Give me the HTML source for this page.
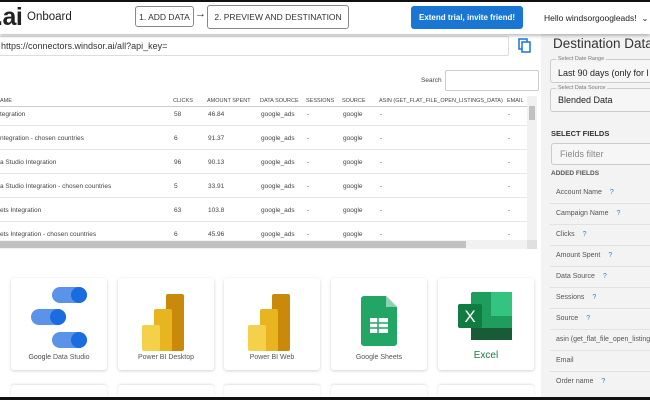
<!DOCTYPE html>
<html style="width:650px;height:400px;overflow:hidden"><head><style>
*{box-sizing:border-box;margin:0;padding:0}
body{width:650px;height:400px;overflow:hidden;background:#fff;font-family:"Liberation Sans",sans-serif;position:relative;color:#333}
.abs{position:absolute}
.hdr{left:0;top:0;width:650px;height:34px;background:#fff;border-top:2px solid #111;box-shadow:0 2px 3px rgba(0,0,0,.25);z-index:5}
.btn{border:1px solid #888;border-radius:3px;font-size:8.5px;color:#333;display:flex;align-items:center;justify-content:center;background:#fff;white-space:nowrap}
.t{font-size:6.5px;color:#444;white-space:nowrap}
.th{font-size:5.5px;color:#444;white-space:nowrap}
.row{left:0;width:527px;height:1px;background:#e6e6e6}
.card{width:96px;height:92px;background:#fff;border-radius:3px;box-shadow:0 1px 3px rgba(0,0,0,.18)}
.card2{width:96px;height:12px;background:#fff;border-radius:3px 3px 0 0;box-shadow:0 -1px 2px rgba(0,0,0,.12)}
.lbl{position:absolute;left:0;right:0;top:76px;text-align:center;font-size:7px;color:#555}
.side{left:541px;top:34px;width:109px;height:363px;background:#f3f3f3}
.fld{left:550px;width:100px;height:21px;border-bottom:1px solid #e2e2e2;font-size:7px;color:#555;padding:6px 0 0 6px;white-space:nowrap;overflow:hidden}
.q{color:#3a7bd5;margin-left:8px}
</style></head><body>
<div class="abs hdr">
  <div class="abs" style="left:-4px;top:1px;font-size:25px;font-weight:bold;color:#222;letter-spacing:-0.5px">.ai</div>
  <div class="abs" style="left:27px;top:9px;font-size:11.5px;color:#222">Onboard</div>
  <div class="abs btn" style="left:135px;top:4px;width:59px;height:21px">1. ADD DATA</div>
  <div class="abs" style="left:195px;top:6px;font-size:11px;color:#222">→</div>
  <div class="abs btn" style="left:207px;top:3px;width:142px;height:24px">2. PREVIEW AND DESTINATION</div>
  <div class="abs" style="left:411px;top:4px;width:112px;height:23px;background:#1976d2;border-radius:3px;color:#fff;font-size:8px;font-weight:bold;display:flex;align-items:center;justify-content:center;white-space:nowrap">Extend trial, invite friend!</div>
  <div class="abs" style="left:544px;top:11px;font-size:8.5px;color:#222;white-space:nowrap">Hello windsorgoogleads! &nbsp;⌄</div>
</div>
<div class="abs" style="left:-2px;top:36px;width:511px;height:20px;border:1px solid #ddd;border-radius:2px;font-size:9px;color:#333;padding:4px 0 0 2px">https://connectors.windsor.ai/all?api_key=</div>
<svg class="abs" style="left:518px;top:38px" width="14" height="15" viewBox="0 0 14 15"><rect x="1" y="1" width="8" height="10" fill="none" stroke="#1976d2" stroke-width="1.5"/><rect x="4" y="4" width="8" height="10" fill="#fff" stroke="#1976d2" stroke-width="1.5"/></svg>
<div class="abs t" style="left:421px;top:77px">Search</div>
<div class="abs" style="left:445px;top:70px;width:94px;height:21px;border:1px solid #ccc;border-radius:2px"></div>
<div class="abs th" style="left:0;top:98px">AME</div>
<div class="abs th" style="left:173px;top:98px">CLICKS</div>
<div class="abs th" style="left:207px;top:98px">AMOUNT SPENT</div>
<div class="abs th" style="left:260px;top:98px">DATA SOURCE</div>
<div class="abs th" style="left:306px;top:98px">SESSIONS</div>
<div class="abs th" style="left:342px;top:98px">SOURCE</div>
<div class="abs th" style="left:379px;top:98px">ASIN (GET_FLAT_FILE_OPEN_LISTINGS_DATA)</div>
<div class="abs th" style="left:507px;top:98px">EMAIL</div>
<div class="abs row" style="top:106px;background:#ccc"></div>
<div class="abs row" style="top:125px"></div>
<div class="abs row" style="top:149px"></div>
<div class="abs row" style="top:173px"></div>
<div class="abs row" style="top:197px"></div>
<div class="abs row" style="top:221px"></div>
<div class="abs t" style="left:0;top:111px">tegration</div><div class="abs t" style="left:174px;top:111px">58</div><div class="abs t" style="left:208px;top:111px">46.84</div><div class="abs t" style="left:261px;top:111px">google_ads</div><div class="abs t" style="left:307px;top:111px">-</div><div class="abs t" style="left:343px;top:111px">google</div><div class="abs t" style="left:380px;top:111px">-</div><div class="abs t" style="left:508px;top:111px">-</div>
<div class="abs t" style="left:0;top:135px">ntegration - chosen countries</div><div class="abs t" style="left:174px;top:135px">6</div><div class="abs t" style="left:208px;top:135px">91.37</div><div class="abs t" style="left:261px;top:135px">google_ads</div><div class="abs t" style="left:307px;top:135px">-</div><div class="abs t" style="left:343px;top:135px">google</div><div class="abs t" style="left:380px;top:135px">-</div><div class="abs t" style="left:508px;top:135px">-</div>
<div class="abs t" style="left:0;top:159px">a Studio Integration</div><div class="abs t" style="left:174px;top:159px">96</div><div class="abs t" style="left:208px;top:159px">90.13</div><div class="abs t" style="left:261px;top:159px">google_ads</div><div class="abs t" style="left:307px;top:159px">-</div><div class="abs t" style="left:343px;top:159px">google</div><div class="abs t" style="left:380px;top:159px">-</div><div class="abs t" style="left:508px;top:159px">-</div>
<div class="abs t" style="left:0;top:183px">a Studio Integration - chosen countries</div><div class="abs t" style="left:174px;top:183px">5</div><div class="abs t" style="left:208px;top:183px">33.91</div><div class="abs t" style="left:261px;top:183px">google_ads</div><div class="abs t" style="left:307px;top:183px">-</div><div class="abs t" style="left:343px;top:183px">google</div><div class="abs t" style="left:380px;top:183px">-</div><div class="abs t" style="left:508px;top:183px">-</div>
<div class="abs t" style="left:0;top:207px">ets Integration</div><div class="abs t" style="left:174px;top:207px">63</div><div class="abs t" style="left:208px;top:207px">103.8</div><div class="abs t" style="left:261px;top:207px">google_ads</div><div class="abs t" style="left:307px;top:207px">-</div><div class="abs t" style="left:343px;top:207px">google</div><div class="abs t" style="left:380px;top:207px">-</div><div class="abs t" style="left:508px;top:207px">-</div>
<div class="abs t" style="left:0;top:231px">ets Integration - chosen countries</div><div class="abs t" style="left:174px;top:231px">6</div><div class="abs t" style="left:208px;top:231px">45.96</div><div class="abs t" style="left:261px;top:231px">google_ads</div><div class="abs t" style="left:307px;top:231px">-</div><div class="abs t" style="left:343px;top:231px">google</div><div class="abs t" style="left:380px;top:231px">-</div><div class="abs t" style="left:508px;top:231px">-</div>
<div class="abs" style="left:527px;top:96px;width:10px;height:144px;background:#f1f1f1"></div>
<div class="abs" style="left:529px;top:106px;width:6px;height:14px;background:#c1c1c1"></div>
<div class="abs" style="left:0;top:240px;width:527px;height:9px;background:#f1f1f1"></div>
<div class="abs" style="left:0;top:241px;width:466px;height:7px;background:#c1c1c1"></div>
<div class="abs" style="left:527px;top:240px;width:10px;height:9px;background:#e0e0e0"></div>

<div class="abs card" style="left:11px;top:278px">
 <svg class="abs" style="left:18px;top:8px" width="60" height="62"><rect x="23" y="1" width="35" height="16" rx="8" fill="#5b93e8"/><circle cx="50" cy="9" r="8" fill="#1a6de0"/><rect x="2" y="23" width="35" height="16" rx="8" fill="#5b93e8"/><circle cx="29" cy="31" r="8" fill="#1a6de0"/><rect x="23" y="46" width="35" height="16" rx="8" fill="#5b93e8"/><circle cx="50" cy="54" r="8" fill="#1a6de0"/></svg>
 <div class="lbl"><b style="font-weight:normal;color:#444">Google</b> Data Studio</div></div>
<div class="abs card" style="left:118px;top:278px">
 <svg class="abs" style="left:24px;top:16px" width="45" height="58"><rect x="24" y="0" width="18" height="57" rx="2" fill="#c98a0c"/><rect x="12" y="15" width="18" height="42" rx="2" fill="#e8b520"/><rect x="0" y="31" width="18" height="26" rx="2" fill="#f5d04a"/></svg>
 <div class="lbl">Power BI Desktop</div></div>
<div class="abs card" style="left:224px;top:278px">
 <svg class="abs" style="left:24px;top:16px" width="45" height="58"><rect x="24" y="0" width="18" height="57" rx="2" fill="#c98a0c"/><rect x="12" y="15" width="18" height="42" rx="2" fill="#e8b520"/><rect x="0" y="31" width="18" height="26" rx="2" fill="#f5d04a"/></svg>
 <div class="lbl">Power BI Web</div></div>
<div class="abs card" style="left:331px;top:278px">
 <svg class="abs" style="left:30px;top:18px" width="36" height="50"><path d="M3 0H25L36 11V47a3 3 0 0 1-3 3H3a3 3 0 0 1-3-3V3a3 3 0 0 1 3-3z" fill="#23a566"/><path d="M25 0V11H36z" fill="#8ed1b1"/><rect x="9" y="22" width="18" height="15" fill="#fff"/><path d="M9 27H27M9 32H27M17 22V37" stroke="#23a566" stroke-width="1.5"/></svg>
 <div class="lbl">Google Sheets</div></div>
<div class="abs card" style="left:438px;top:278px">
 <svg class="abs" style="left:20px;top:14px" width="54" height="50"><rect x="13" y="0" width="41" height="48" rx="2" fill="#1f9d5c"/><rect x="33" y="0" width="21" height="24" fill="#33c481"/><rect x="13" y="36" width="41" height="12" fill="#185c37"/><rect x="0" y="12" width="24" height="24" rx="2" fill="#107c41"/><text x="12" y="30" font-size="17" font-family="Liberation Sans" fill="#fff" text-anchor="middle">X</text></svg>
 <div class="lbl" style="top:72px;font-size:10px;color:#1d7a44">Excel</div></div>
<div class="abs card2" style="left:11px;top:385px"></div><div class="abs card2" style="left:118px;top:385px"></div><div class="abs card2" style="left:224px;top:385px"></div><div class="abs card2" style="left:331px;top:385px"></div><div class="abs card2" style="left:438px;top:385px"></div>

<div class="abs side"></div>
<div class="abs" style="left:553px;top:36px;font-size:13.5px;color:#333;white-space:nowrap">Destination Data</div>
<div class="abs" style="left:550px;top:59px;width:110px;height:24px;border:1px solid #ccc;border-radius:3px;background:#f6f6f6"></div>
<div class="abs" style="left:556px;top:56px;font-size:5.5px;color:#777;background:#f3f3f3;padding:0 2px">Select Date Range</div>
<div class="abs" style="left:558px;top:68px;font-size:9px;color:#222;white-space:nowrap">Last 90 days (only for l</div>
<div class="abs" style="left:550px;top:88px;width:110px;height:24px;border:1px solid #ccc;border-radius:3px;background:#f6f6f6"></div>
<div class="abs" style="left:556px;top:85px;font-size:5.5px;color:#777;background:#f3f3f3;padding:0 2px">Select Data Source</div>
<div class="abs" style="left:558px;top:95px;font-size:9px;color:#222">Blended Data</div>
<div class="abs" style="left:551px;top:129px;font-size:7.5px;font-weight:bold;color:#333">SELECT FIELDS</div>
<div class="abs" style="left:551px;top:143px;width:110px;height:22px;border:1px solid #ccc;border-radius:3px;background:#f6f6f6;font-size:9px;color:#888;padding:5px 0 0 8px">Fields filter</div>
<div class="abs" style="left:551px;top:170px;font-size:6.5px;font-weight:bold;color:#555">ADDED FIELDS</div>
<div class="abs fld" style="top:183px">Account Name<span class="q">?</span></div>
<div class="abs fld" style="top:204px">Campaign Name<span class="q">?</span></div>
<div class="abs fld" style="top:225px">Clicks<span class="q">?</span></div>
<div class="abs fld" style="top:246px">Amount Spent<span class="q">?</span></div>
<div class="abs fld" style="top:267px">Data Source<span class="q">?</span></div>
<div class="abs fld" style="top:288px">Sessions<span class="q">?</span></div>
<div class="abs fld" style="top:309px">Source<span class="q">?</span></div>
<div class="abs fld" style="top:330px">asin (get_flat_file_open_listings</div>
<div class="abs fld" style="top:351px">Email</div>
<div class="abs fld" style="top:372px;height:20px;border-bottom:none">Order name<span class="q">?</span></div>
<div class="abs" style="left:0;top:397px;width:650px;height:3px;background:#111;z-index:20"></div>
</body></html>
